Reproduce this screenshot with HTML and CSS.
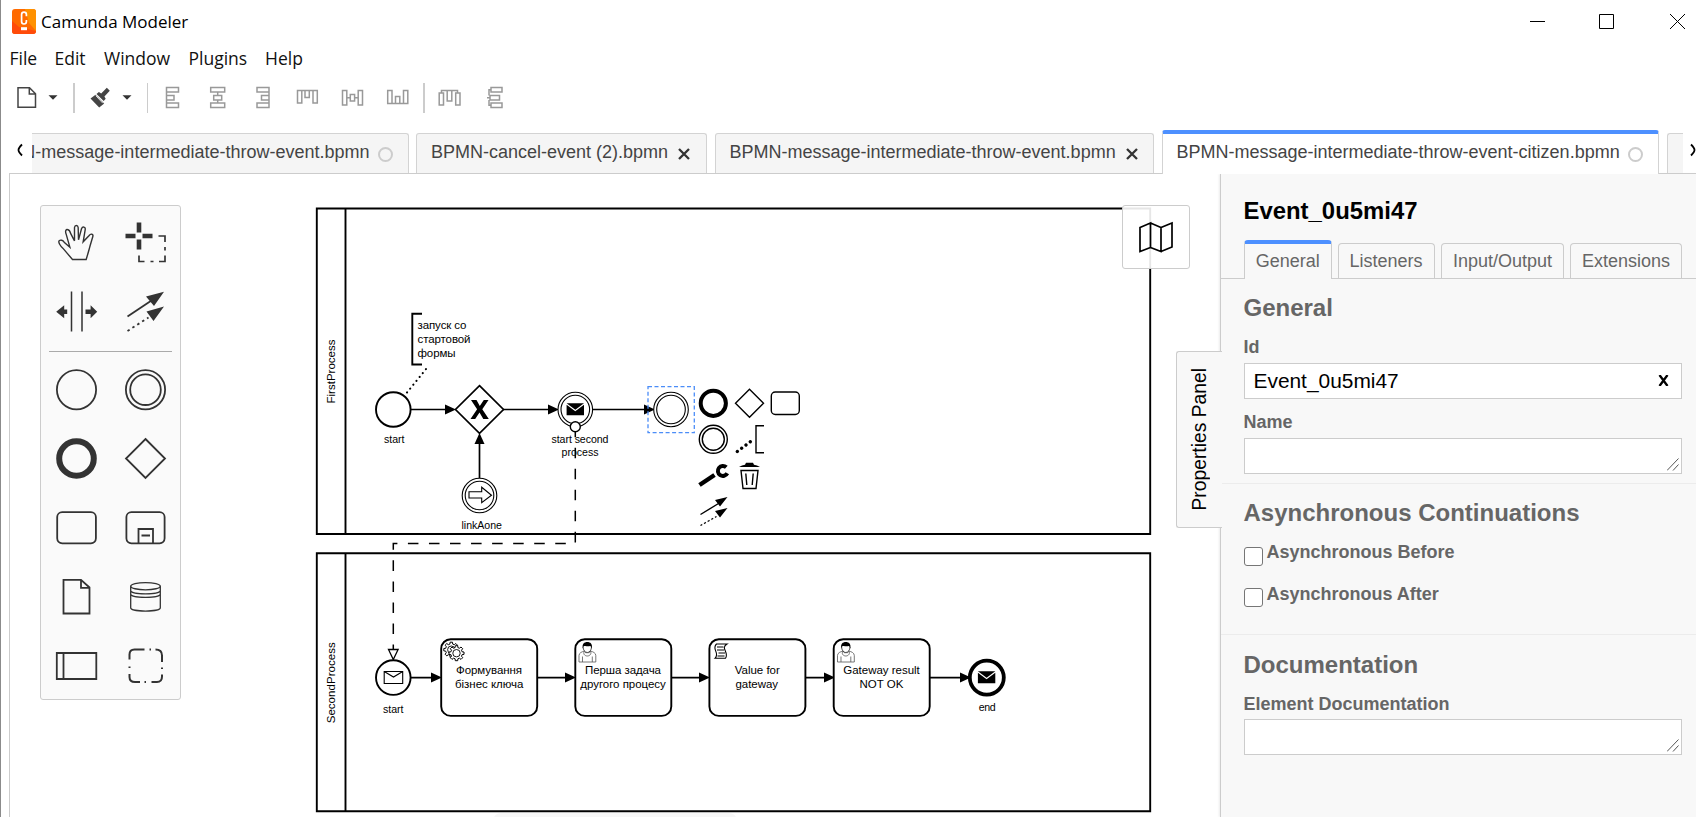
FILE: index.html
```html
<!DOCTYPE html>
<html lang="en">
<head>
<meta charset="utf-8">
<title>Camunda Modeler</title>
<link rel="stylesheet" href="styles.css">
</head>
<body>
<div class="app">
  <header class="titlebar">
    <svg class="logo" width="24" height="25" viewBox="0 0 24 25"><rect width="24" height="25" rx="3" fill="#ff6a00"/><path d="M13 0h8a3 3 0 0 1 3 3v19l-7-8z" fill="#ff9100"/><path d="M0 12l7 6 17 4a3 3 0 0 1-3 3H3a3 3 0 0 1-3-3z" fill="#ff4b0a"/><path d="M14.400 7.300V5.600a2.400 2.400 0 0 0-4.800 0v7a2.400 2.400 0 0 0 4.800 0V11" fill="none" stroke="#fff" stroke-width="1.700"/><path d="M9 18.200h6v3H9z" fill="#fff"/></svg>
    <span class="app-name">Camunda Modeler</span>
    <svg class="controls" width="160" height="20" viewBox="1528 12 160 20" fill="none" stroke="#000" stroke-width="1"><path d="M1530 21.500h15M1599.500 14.500h14v14h-14zM1670 14l15 15M1685 14l-15 15"/></svg>
  </header>
  <nav class="menu"><span class="m-file">File</span><span class="m-edit">Edit</span><span class="m-window">Window</span><span class="m-plugins">Plugins</span><span class="m-help">Help</span></nav>
  <div class="toolbar">
    <svg class="tool-file" width="22" height="30" viewBox="16 83 22 30" fill="none" stroke="#444" stroke-width="1.500"><path d="M18 87.700h11.500l6 6v13.500H18zM29.300 88v6h6"/></svg>
    <svg class="caret" width="10" height="30" viewBox="48.500 83 10 30"><path d="M49 95.300h9l-4.500 4.400z" fill="#333"/></svg>
    <i class="sep thick"></i>
    <svg class="tool-brush" width="22" height="30" viewBox="89 83 22 30" fill="#444"><path d="M90.500 98.500l5-3.700 8.700 8.700-5 4z M96.500 94l2.400-2 2.300 1.500 5.600-5.700 3 3-5.400 5.700 1.300 2.300-2 2.200z"/><path d="M94.300 97.500l7 7.500" stroke="#fff" stroke-width=".8" transform="translate(1.500 -1.800)"/></svg>
    <svg class="caret" width="10" height="30" viewBox="122.500 83 10 30"><path d="M123 95.300h9l-4.500 4.400z" fill="#333"/></svg>
    <i class="sep"></i>
    <svg class="al" width="45" height="30" viewBox="150.500 83 45 30"><path d="M167 87.500h12v4.500h-12zM167 95.500h7.500v4.500H167zM167 103h12v4.500h-12zM167 87.500v20"/></svg>
    <svg class="al" width="45" height="30" viewBox="196 83 45 30"><path d="M211.700 87.500h14v4.500h-14zM214.700 95.500h8v4.500h-8zM211.700 103h14v4.500h-14zM218.700 92v3.500M218.700 100v3"/></svg>
    <svg class="al" width="45" height="30" viewBox="241.500 83 45 30"><path d="M258.500 87.500h12v4.500h-12zM263 95.500h7.500v4.500H263zM258.500 103h12v4.500h-12zM270.500 87.500v20"/></svg>
    <svg class="al" width="45" height="30" viewBox="286 83 45 30"><path d="M298.500 90.500h4.300v12.500h-4.300zM306 90.500h4.300v7H306zM314 90.500h4.300v12.500H314zM298.500 90.500h19.500"/></svg>
    <svg class="al" width="45" height="30" viewBox="331 83 45 30"><path d="M343.500 90.500h4.300v14.500h-4.300zM351.300 94.500h4.300v6.500h-4.300zM359.200 90.500h4.300v14.500h-4.300zM347.800 97.700h3.500M355.600 97.700h3.600"/></svg>
    <svg class="al" width="45" height="30" viewBox="376 83 45 30"><path d="M388.700 90.500h4.300v13h-4.300zM396.500 96.500h4.300v7h-4.300zM404.500 90.500h4.300v13h-4.300zM388.700 103.500h20"/></svg>
    <i class="sep thick last"></i>
    <svg class="al" width="45" height="30" viewBox="428.500 83 45 30"><path d="M440.700 93h4.300v12h-4.300zM448.700 90.500h4.600v10.500h-4.600zM457.200 93h4.300v12h-4.300zM443 93v-2.500h5.700M453.300 90.500h5.700V93"/></svg>
    <svg class="al" width="45" height="30" viewBox="473.500 83 45 30"><path d="M492.500 87.500h11v4.500h-11zM491.500 95.500h9.500v4.500h-9.500zM492.500 103h11v4.500h-11zM492.500 89.700h-2v5.800M488.500 97.700h3M490.500 100v5.200h2"/></svg>
  </div>

  <div class="tabs">
    <div class="scroll-btn left"><svg width="8" height="14" viewBox="0 0 8 14"><path d="M6 1.500Q2.500 5 2.500 7T6 12.500" fill="none" stroke="#000" stroke-width="1.800"/></svg></div>
    <div class="tab clipped"><span class="lbl"><span>BPMN-message-intermediate-throw-event.bpmn</span></span><i class="dot"></i></div>
    <div class="tab second"><span>BPMN-cancel-event (2).bpmn</span><svg class="x" width="12" height="12" viewBox="0 0 12 12"><path d="M1 1l10 10M11 1L1 11"/></svg></div>
    <div class="tab third"><span>BPMN-message-intermediate-throw-event.bpmn</span><svg class="x" width="12" height="12" viewBox="0 0 12 12"><path d="M1 1l10 10M11 1L1 11"/></svg></div>
    <div class="tab active"><span>BPMN-message-intermediate-throw-event-citizen.bpmn</span><i class="dot"></i></div>
    <div class="tab stub"></div>
    <div class="scroll-btn right"><svg width="8" height="14" viewBox="0 0 8 14"><path d="M2 1.500Q5.500 5 5.500 7T2 12.500" fill="none" stroke="#000" stroke-width="1.800"/></svg></div>
  </div>

  <main class="work">
    <section class="canvas">
      <svg class="diagram" width="1210" height="643" viewBox="10 174 1210 643">
        <defs>
          <path id="head" d="M0-5L11 0L0 5z"/>
          <g id="envelope"><path d="M-8.700-6.200h17.400L0 .300z"/><path d="M-8.700-4.700L0 1.800L8.700-4.700V5.800H-8.700z"/></g>
          <path id="gear" d="M5.600-1.400L7.500-1.200V1.200L5.600 1.400 5 3 6.200 4.500 4.500 6.200 3 5 1.400 5.600 1.200 7.500H-1.200L-1.400 5.600-3 5-4.500 6.200-6.200 4.500-5 3-5.600 1.400-7.500 1.200V-1.200L-5.600-1.400-5-3-6.200-4.500-4.500-6.200-3-5-1.400-5.600-1.200-7.500H1.200L1.400-5.600 3-5 4.500-6.200 6.200-4.500 5-3z"/>
          <g id="user" fill="#fff" stroke="#555" stroke-width=".8"><path d="M-8.300 20v-6.500c0-2.700 3-3.800 5.600-4.500l1 1.700h3.700l1-1.700c2.600.7 5.500 1.800 5.500 4.500V20zM-4.800 20v-5.500M5 20v-5.500M-2.700 9c-2 2.500 0 5 2.700 5s4.700-2.500 3-5"/><path d="M-4.200 5c0 3 2 5.500 4.200 5.500S4.200 8 4.200 5" stroke="#222"/><path d="M-4.500 6.500c-1-4.500 1.500-6.500 4.500-6.500s5.500 2 4.500 6.500c-.5-1.600-1-2.200-1.800-2.500-2 .9-3.500-.2-5.700.1-1 .7-1.200 1.200-1.500 2.400z" fill="#000" stroke="none"/></g>
        </defs>
        <path d="M494 817q2-4 8-4h226q6 0 8 4z" fill="#f7f7f7"/>
        <g fill="none" stroke="#000" stroke-width="1.900">
          <path d="M316.800 208.500h833.400v325.500H316.800zM345.500 208.500v325.500M316.800 553.300h833.400v258H316.800zM345.500 553.300v258"/>
          <path d="M422 313.700h-9.700v50.800H422"/>
          <path d="M407 392.500L428.500 366" stroke-dasharray=".1 4.900" stroke-linecap="round" stroke-width="2.100"/>
          <path d="M411 409.500h36M503 409.500h47M593 409.500h52M479.500 478v-36M411 677.600h22M537 677.600h30M671.500 677.600h30M805.500 677.600h20M930 677.600h32" stroke-width="1.700"/>
          <path d="M575.300 426.600V543.400H393.300V649" stroke-width="1.500" stroke-dasharray="10.550 10.500"/>
        </g>
        <g>
          <use href="#head" x="445" y="409.500"/><use href="#head" x="548" y="409.500"/><use href="#head" x="644" y="409.500"/>
          <use href="#head" transform="translate(479.500 444) rotate(-90)"/>
          <use href="#head" x="431" y="677.600"/><use href="#head" x="565" y="677.600"/><use href="#head" x="699" y="677.600"/><use href="#head" x="824" y="677.600"/><use href="#head" x="960" y="677.600"/>
        </g>
        <g fill="#fff" stroke="#000" stroke-width="1.900">
          <circle cx="393.300" cy="409.500" r="17.300"/>
          <path d="M479.500 385.700l24 23.800-24 23.900-24-23.900z" stroke-width="1.700"/>
          <circle cx="393.300" cy="677.600" r="17.300"/>
          <circle cx="986.800" cy="677.600" r="17" stroke-width="3.800"/>
          <rect x="441.200" y="639.200" width="96" height="76.700" rx="9.500"/>
          <rect x="575.300" y="639.200" width="96" height="76.700" rx="9.500"/>
          <rect x="709.400" y="639.200" width="96" height="76.700" rx="9.500"/>
          <rect x="833.700" y="639.200" width="96" height="76.700" rx="9.500"/>
        </g>
        <g fill="#fff" stroke="#000" stroke-width="1.100">
          <circle cx="575.300" cy="409.500" r="17.300"/><circle cx="575.300" cy="409.500" r="14.300"/>
          <circle cx="671" cy="409.500" r="17.300"/><circle cx="671" cy="409.500" r="14.300"/>
          <circle cx="479.500" cy="495.500" r="17.300"/><circle cx="479.500" cy="495.500" r="14.300"/>
          <path d="M469 491.700h12.700v-4.500l9.800 8-9.800 7.500V498H469z"/>
          <circle cx="575.300" cy="426.700" r="5" stroke-width="1.400"/>
          <path d="M388.500 649.500h9.600l-4.800 10z" stroke-width="1.300"/>
          <path d="M384.200 671.500h18.500v12h-18.500zM384.200 671.500l9.300 5.500 9.200-5.500"/>
        </g>
        <path d="M471 400h5.500l3.300 6 4-6h4.700l-6.200 9.200 6.500 9.800h-5.500l-3.800-6.600-4.300 6.600h-4.700l6.600-9.800z"/>
        <use href="#envelope" x="575.300" y="409.500"/><use href="#envelope" x="986.600" y="677.500"/>
        <rect x="648" y="386.700" width="46.300" height="46" fill="none" stroke="#4b8df8" stroke-width="1.300" stroke-dasharray="4 2.500"/>
        <use href="#gear" x="451.300" y="649.700" fill="#fff" stroke="#000" stroke-width="1"/>
        <circle cx="451.300" cy="649.700" r="3.700" fill="#fff" stroke="#000" stroke-width=".9"/>
        <use href="#gear" x="456.500" y="653.200" fill="#fff" stroke="#000" stroke-width="1"/>
        <circle cx="456.500" cy="653.200" r="3.700" fill="#fff" stroke="#000" stroke-width=".9"/>
        <use href="#user" x="587.300" y="642"/><use href="#user" x="845.800" y="642"/>
        <path d="M716.500 644h10.500c-7 4.500 2.500 8 -1.500 14.300h-10.500c5.500-5.300-4-9 1.500-14.300zM717 647h6.500M717 650h7M718.500 653h6.500M717.500 656h7" fill="none" stroke="#000" stroke-width="1.100"/>

        <g class="labels">
          <text x="384" y="442.500" textLength="20.500">start</text>
          <text x="551.500" y="442.500" textLength="57">start second</text>
          <text x="561.500" y="455.500" textLength="37">process</text>
          <text x="461.500" y="528.500" textLength="40.500">linkAone</text>
          <text x="383" y="713.200" textLength="20.500">start</text>
          <text x="978.700" y="710.600" textLength="17">end</text>
        </g>
        <g class="names">
          <text x="417.500" y="328.500" textLength="49">запуск со</text>
          <text x="417.500" y="342.500" textLength="53">стартовой</text>
          <text x="417.500" y="356.500" textLength="38">формы</text>
          <text x="456" y="674" textLength="66">Формування</text>
          <text x="455" y="688" textLength="68.500">бізнес ключа</text>
          <text x="585" y="674" textLength="76">Перша задача</text>
          <text x="580.300" y="688" textLength="85.500">другого процесу</text>
          <text x="734.800" y="674" textLength="45">Value for</text>
          <text x="735.500" y="688" textLength="42.500">gateway</text>
          <text x="843.300" y="674" textLength="76.500">Gateway result</text>
          <text x="859.500" y="688" textLength="44">NOT OK</text>
          <text transform="translate(335 403.500) rotate(-90)" textLength="64">FirstProcess</text>
          <text transform="translate(335 723.300) rotate(-90)" textLength="81">SecondProcess</text>
        </g>

        <g class="context-pad" fill="none" stroke="#000" stroke-width="1.400">
          <circle cx="713.300" cy="403.300" r="12.600" stroke-width="4"/>
          <path d="M749.500 389.300l14 14-14 14-14-14z"/>
          <rect x="771.300" y="392" width="28" height="22.500" rx="4"/>
          <circle cx="713.300" cy="439.300" r="14"/><circle cx="713.300" cy="439.300" r="11"/>
          <path d="M764 425.700h-8v27h8"/>
          <path d="M737.300 451.500L754 439" stroke-width="3.400" stroke-linecap="round" stroke-dasharray=".1 5.300"/>
          <path d="M699.500 485l15-10" stroke-width="4.400"/>
          <path d="M726.300 467.300a5 5 0 1 0 1 6" stroke-width="4"/>
          <path d="M741 470.500h17l-2 18h-13zM745.800 473.500l1 11.500M753.200 473.500l-1 11.500"/>
          <path d="M739 467q3-2 6-2.200l1-2h7l1 2q3 .2 6 2.200z" fill="#000" stroke="none"/>
          <path d="M700.500 514.500l18-11M700.500 525.500l16-9"/>
          <path d="M700.500 525.500l16-9" stroke="#fff" stroke-width="2.500" stroke-dasharray="2 2.200" stroke-dashoffset="-2"/>
          <path d="M727.500 497l-7.500 9.500-5-6.500zM727.500 508l-7.500 9.500-5-6.500z" fill="#000" stroke="none"/>
        </g>
      </svg>

      <div class="palette">
        <svg viewBox="41.500 208.500 69 69"><g transform="translate(20 190) scale(.33333)"><path d="M156 210L127 176C120 170 112 158 116 154C120 150 127 152 131 158L148 173L137 134C133 124 137 119 141 120C147 121 149 127 150 131L162 154L162 114C163 106 172 106 173 114L174 151L183 118C186 110 196 111 194 121L188 157L206 138C211 131 219 134 217 141L209 168C206 180 203 190 197 210Z" stroke-width="4.200"/></g></svg>
        <svg viewBox="110.500 208.500 69 69"><path d="M138.500 223v10M138.500 240v10M125 236.500h10M142 236.500h10" stroke-width="4.600"/><path d="M158 236.500h6.500v6M164.500 247.500v3.500M164.500 256v6h-6M153 262h-3M144 262h-5.500v-6" stroke-width="1.700"/></svg>
        <svg viewBox="41.500 277.500 69 69"><path d="M71 292v40M81.500 292v40" stroke-width="1.500"/><path d="M55.700 312.300l8-6.500v4.200h3v4.600h-3v4.200zM96.700 312.300l-6.600-6.500v4.200H85v4.600h5.100v4.200z" fill="#333" stroke="none"/></svg>
        <svg viewBox="110.500 277.500 69 69"><path d="M127 317l27-18"/><path d="M127 331.500l21-13.500" stroke-dasharray="2.500 3.300"/><path d="M163.500 292.300l-10 14.200-8-9.500zM163.500 307l-10.500 14.500-7-9.500z" fill="#333" stroke="none"/></svg>
        <i class="rule"></i>
        <svg viewBox="41.500 355.500 69 69"><circle cx="76" cy="390.200" r="19.600"/></svg>
        <svg viewBox="110.500 355.500 69 69"><circle cx="145" cy="390.200" r="19.600"/><circle cx="145" cy="390.200" r="15.300"/></svg>
        <svg viewBox="41.500 424.500 69 69"><circle cx="76" cy="459" r="17.300" stroke-width="6"/></svg>
        <svg viewBox="110.500 424.500 69 69"><path d="M145 439.500l19.500 19.500-19.500 19.500-19.500-19.500z"/></svg>
        <svg viewBox="41.500 493.500 69 69"><rect x="56.700" y="512.600" width="38.700" height="31.200" rx="5"/></svg>
        <svg viewBox="110.500 493.500 69 69"><rect x="125.900" y="512.600" width="38.200" height="31.200" rx="5"/><path d="M138 543.500v-14h14.500v14M141 536h8.500"/></svg>
        <svg viewBox="41.500 562.500 69 69"><path d="M63 580.300h17.500l8.500 7.700v26H63zM80.500 580.300v8H89"/></svg>
        <svg viewBox="110.500 562.500 69 69"><g stroke-width="1.300"><ellipse cx="145" cy="586.700" rx="14.800" ry="3.600"/><path d="M130.200 586.700v21.500c0 4.500 29.600 4.500 29.600 0v-21.500M130.200 591c0 4.500 29.600 4.500 29.600 0M130.200 594.500c0 4.500 29.600 4.500 29.600 0"/></g></svg>
        <svg viewBox="41.500 631.500 69 69"><path d="M56.300 653.500h39.500v26H56.300zM63 653.500v26"/></svg>
        <svg viewBox="110.500 631.500 69 69"><path d="M129 660v-5q0-5 5-5h10M149 650h1.500M155 650q6.500 0 6.500 6v6.500M161.500 668v1.500M161.500 675v2q0 5.500-5 5.500h-5.500M145.500 682.500H144M139.500 682.500h-5q-5.500 0-5.500-5v-3M129 668.500V667" stroke-width="2"/></svg>
      </div>
      <div class="minimap"><svg width="36" height="32" viewBox="0 0 36 32"><path d="M2 6.500L12.500 2v24.500L2 30.500zM12.500 2l10.500 4.500v24L12.500 26.500M23 6.500L34 2v24L23 30.500"/></svg></div>
      <div class="panel-toggle"><span>Properties Panel</span></div>
    </section>

    <aside class="panel">
      <h1>Event_0u5mi47</h1>
      <div class="ptabs"><span class="on">General</span><span class="b">Listeners</span><span class="c">Input/Output</span><span class="d">Extensions</span></div>
      <section class="group g1">
        <h2>General</h2>
        <label>Id</label>
        <div class="field"><span>Event_0u5mi47</span><svg width="11" height="11" viewBox="0 0 11 11"><path d="M1.500 0l8 11M9.500 0l-8 11" stroke="#000" stroke-width="2.300"/></svg></div>
        <label class="name">Name</label>
        <div class="field area"><svg width="12" height="13" viewBox="0 0 12 13"><path d="M0 12.500L11.500 .500M6 12.500l5.500-6" stroke="#555"/></svg></div>
      </section>
      <section class="group g2">
        <h2>Asynchronous Continuations</h2>
        <div class="check"><i></i><span>Asynchronous Before</span></div>
        <div class="check"><i></i><span>Asynchronous After</span></div>
      </section>
      <section class="group g3">
        <h2>Documentation</h2>
        <label>Element Documentation</label>
        <div class="field area"><svg width="12" height="13" viewBox="0 0 12 13"><path d="M0 12.500L11.500 .500M6 12.500l5.500-6" stroke="#555"/></svg></div>
      </section>
    </aside>
  </main>
</div>
</body>
</html>
```

FILE: styles.css
```css
* { box-sizing: border-box; }
body { margin: 0; background: #fff; font-family: "Liberation Sans", Arial, sans-serif; color: #000; }
svg { display: block; flex: none; }
.app { width: 1696px; height: 817px; overflow: hidden; display: flex; flex-direction: column; border-left: 1px solid #8b8b8b; }

.titlebar { height: 43px; display: flex; align-items: flex-start; padding-left: 11px; font-family: "Open Sans", "Noto Sans", sans-serif; }
.logo { margin-top: 9px; }
.app-name { margin: 9px 0 0 5px; font-size: 17px; line-height: 26px; white-space: nowrap; }
.controls { margin: 12px 8px 0 auto; }
.menu { height: 40px; display: flex; font: 17.500px/30px "Open Sans", "Noto Sans", sans-serif; color: #111; }
.menu span { flex: none; white-space: nowrap; }
.m-file { width: 45px; margin-left: 8.500px; }
.m-edit { width: 49.500px; }
.m-window { width: 84.500px; }
.m-plugins { width: 76.500px; }

.toolbar { height: 47px; display: flex; padding-left: 15px; align-items: flex-start; }
.caret { margin-left: 10px; }
.sep { flex: none; width: 1px; height: 30px; background: #ccc; margin: 0 2.500px 0 14.500px; }
.sep.thick { width: 2px; margin: 0 14.500px 0 14.500px; }
.sep.last { margin: 0 2px 0 3px; }
.tool-brush + .caret { margin-left: 11px; }
.al { fill: none; stroke: #999; stroke-width: 1.500; }

.tabs { height: 44px; display: flex; align-items: flex-end; position: relative; margin-left: 8px; border-bottom: 1px solid #ccc; font-size: 18px; color: #444; }
.scroll-btn { flex: none; height: 43px; padding-top: 13px; }
.scroll-btn.left { width: 23px; padding-left: 7px; }
.scroll-btn.right { width: 13px; padding-left: 6px; overflow: hidden; }
.tab { flex: none; display: flex; align-items: center; height: 40px; margin-right: 7.500px; padding: 0 0 3px 14px; background: #f5f5f5; border: 1px solid #d3d3d3; border-bottom: 0; border-radius: 3px 3px 0 0; white-space: nowrap; }
.tab > span { flex: none; }
.clipped { width: 376.500px; padding-left: 0; border-left: 0; border-top-left-radius: 0; }
.lbl { width: 337.500px; overflow: hidden; display: flex; justify-content: flex-end; }
.second { width: 291px; }
.third { width: 439.500px; }
.active { width: 497.500px; height: 44px; margin-bottom: -1px; padding-bottom: 3px; border-top: 4px solid #4d90ff; background: #fff; }
.stub { width: 16px; margin-right: 0; border-right: 0; border-top-right-radius: 0; padding: 0; }
.dot { width: 15px; height: 15px; border: 2px solid #ccc; border-radius: 50%; margin: 4px 0 0 8px; }
.x { margin: 3px 0 0 10px; stroke: #333; stroke-width: 2.300; }

.work { flex: 1; display: flex; margin-left: 8px; border-left: 1px solid #ccc; min-height: 0; }
.canvas { position: relative; flex: none; width: 1210px; height: 643px; }
.labels text { font-size: 10.600px; }
.names text { font-size: 11.500px; }
.palette { position: absolute; left: 30px; top: 31px; width: 141px; height: 495px; padding: 2px 0 0 .500px; display: grid; grid-template-columns: 69px 69px; grid-template-rows: 69px 69px 9px; grid-auto-rows: 69px; background: #fafafa; border: 1px solid #ccc; border-radius: 3px; }
.palette svg { width: 69px; height: 69px; fill: none; stroke: #333; stroke-width: 1.800; }
.rule { grid-column: 1 / 3; width: 123px; height: 1px; margin: 5px 0 0 7px; background: #aaa; }
.minimap { position: absolute; left: 1112px; top: 31px; width: 68px; height: 64px; background: rgba(255,255,255,.9); border: 1px solid #ccc; border-radius: 3px; padding: 15px 0 0 15px; }
.minimap path { fill: none; stroke: #000; stroke-width: 1.700; }
.panel-toggle { position: absolute; z-index: 2; left: 1166px; top: 177px; width: 46px; height: 177px; background: #f8f8f8; border: 1px solid #ccc; border-right: 0; border-radius: 3px 0 0 3px; display: flex; align-items: center; justify-content: center; }
.panel-toggle span { writing-mode: vertical-rl; transform: rotate(180deg); font-size: 19.300px; line-height: 22px; white-space: nowrap; }

.panel { flex: 1; background: #f8f8f8; border-left: 1px solid #ccc; box-shadow: -1px 0 2px rgba(0,0,0,.08); min-width: 0; }
.panel h1 { margin: 23px 0 0 22.500px; font-size: 23.900px; line-height: 28px; height: 43px; }
.ptabs { display: flex; align-items: flex-end; height: 39px; padding-left: 23px; border-bottom: 1px solid #ccc; font-size: 18px; color: #666; white-space: nowrap; }
.ptabs span { height: 35px; margin-right: 6.500px; text-align: center; line-height: 34px; border: 1px solid #ccc; border-bottom: 0; border-radius: 4px 4px 0 0; flex: none; }
.ptabs .on { width: 87.500px; height: 39px; margin-bottom: -1px; margin-right: 6px; border-top: 4px solid #4d90ff; background: #f8f8f8; }
.ptabs .b { width: 97px; }
.ptabs .c { width: 123px; margin-right: 6px; }
.ptabs .d { width: 112px; }
.group { padding-left: 22.500px; color: #666; font-weight: bold; border-bottom: 1px solid #ececec; }
.group h2 { margin: 0; font-size: 24px; line-height: 28px; }
.group label { display: block; font-size: 18px; line-height: 22px; }
.g1 { height: 205px; padding-top: 15px; }
.g1 h2 { margin-bottom: 14px; }
.g1 label { margin-bottom: 5px; }
.g1 label.name { margin-top: 12px; }
.g2 { height: 151px; padding-top: 15px; }
.g3 { border: 0; padding-top: 16px; }
.g3 h2 { margin-bottom: 14px; }
.g3 label { margin-bottom: 4px; }
.field { width: 438px; height: 36px; background: #fff; border: 1px solid #ccc; display: flex; justify-content: space-between; align-items: center; padding: 0 12px 0 9px; font-weight: normal; font-size: 20.900px; color: #000; }
.field > svg { margin-bottom: 2px; }
.area { align-items: flex-end; justify-content: flex-end; padding: 0 2px; }
.area svg path { fill: none; stroke-width: 1; }
.check { height: 42px; display: flex; font-size: 18px; line-height: 22px; }
.check i { width: 19px; height: 19px; margin: 20px 4px 0 0; background: #fff; border: 1px solid #767676; border-radius: 3px; flex: none; }
.check span { padding-top: 14px; }
.check:nth-of-type(2) i { margin-top: 19px; }
```
